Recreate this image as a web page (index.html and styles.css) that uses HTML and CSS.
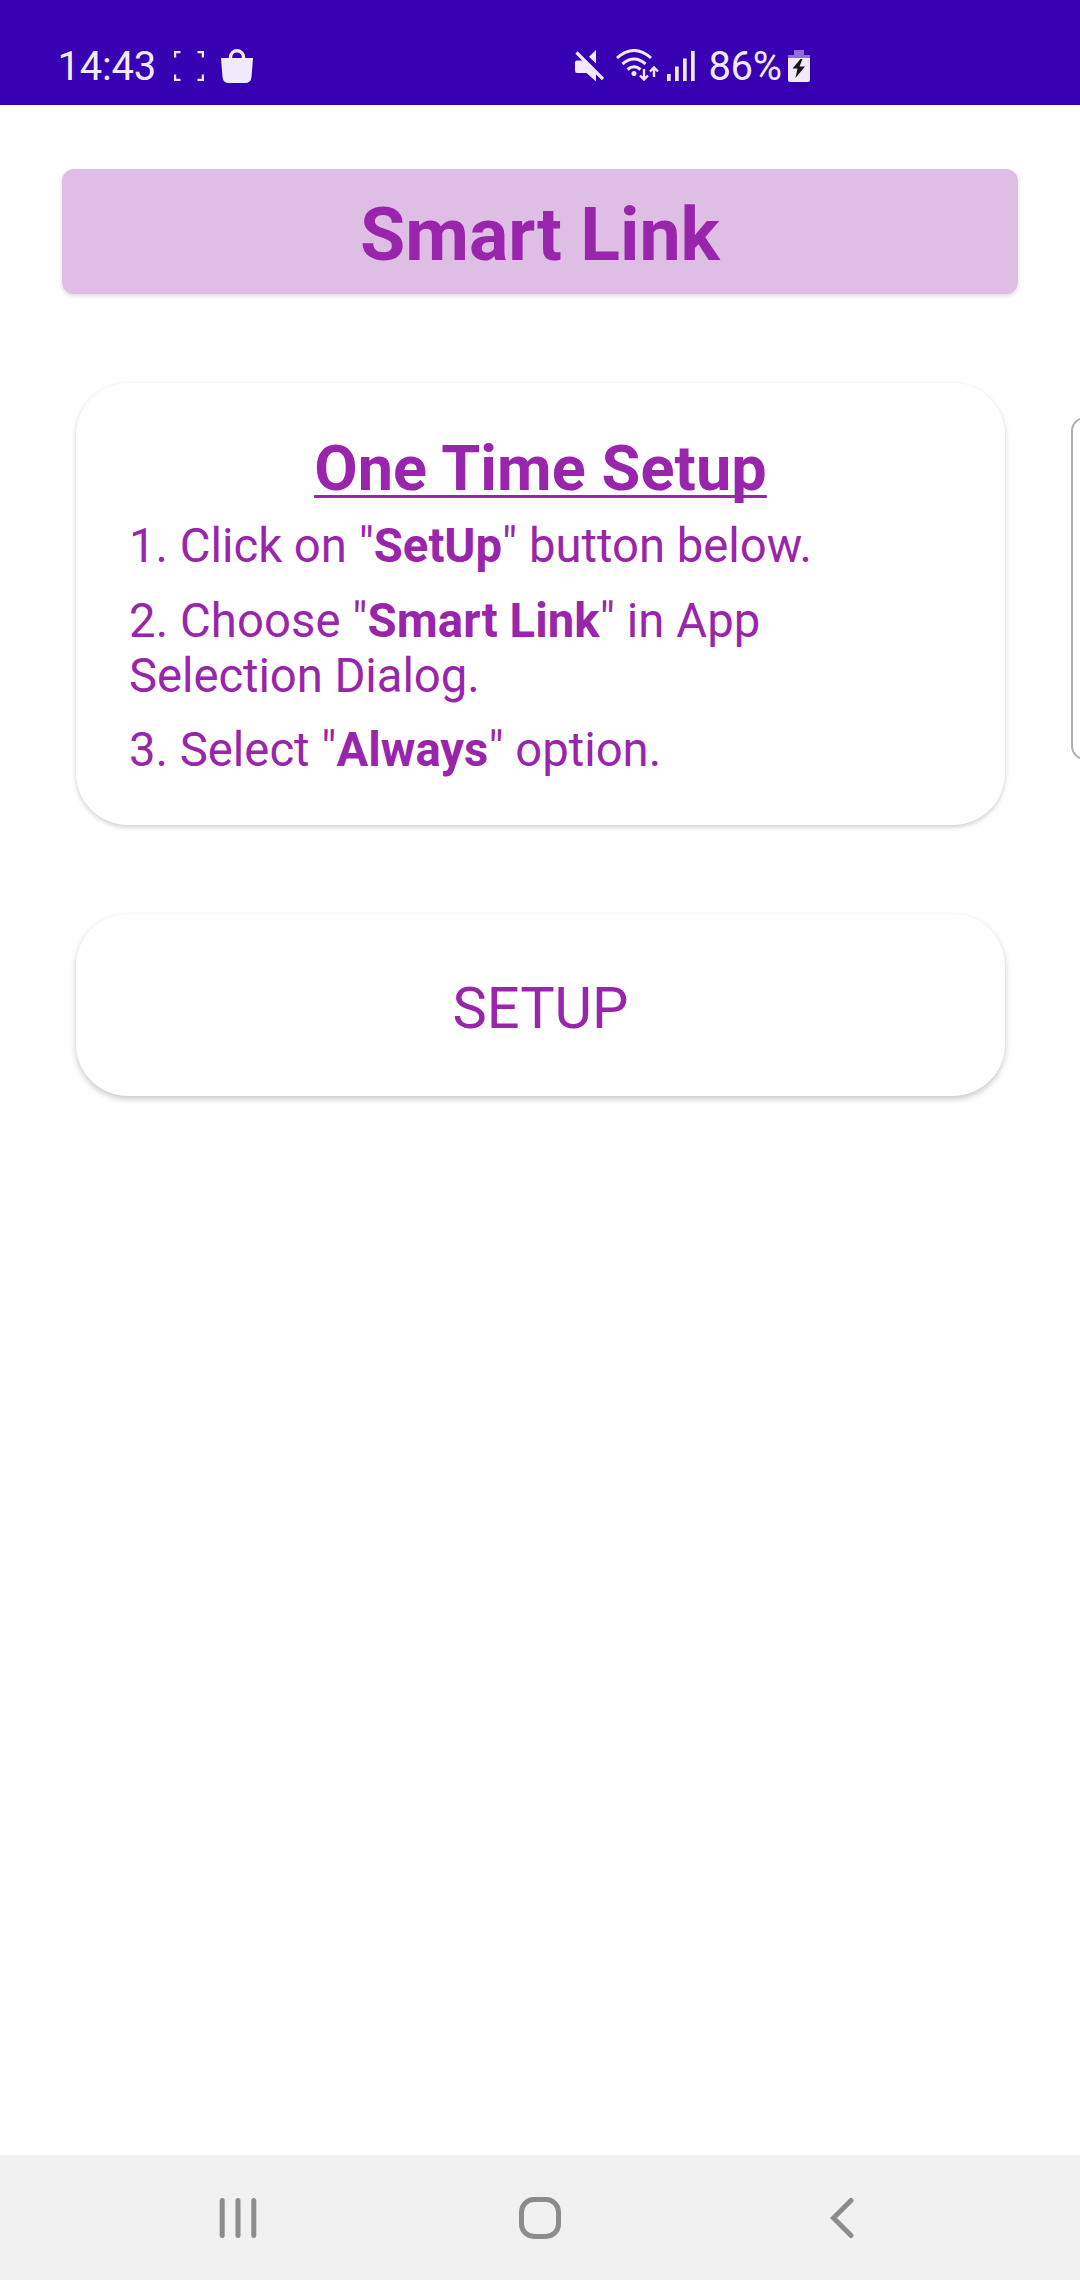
FILE: index.html
```html
<!DOCTYPE html>
<html lang="en">
<head>
<meta charset="utf-8">
<title>Smart Link</title>
<link rel="stylesheet" href="styles.css">
</head>
<body>
<div class="screen">
  <header class="status">
    <div class="status-left">
      <span class="clock">14:43</span>
      <svg class="i-frame" width="30" height="30" viewBox="0 0 30 30" fill="none" stroke="#f0eafc" stroke-width="2.2"><path d="M1.1 6.5V1.1H6.5M23.5 1.1H28.9V6.5M28.9 23.5V28.9H23.5M6.5 28.9H1.1V23.5"/></svg>
      <svg class="i-bag" width="32" height="34" viewBox="0 0 32 34"><path d="M9.5 11V8a6.5 6.2 0 0 1 13 0v3" fill="none" stroke="#f0eafc" stroke-width="3.4"/><path d="M0 9H32L30.5 28Q30 34 24 34H8Q2 34 1.5 28Z" fill="#f0eafc"/></svg>
    </div>
    <div class="status-right">
      <svg width="29" height="32" viewBox="0 0 29 32" fill="#f0eafc"><path d="M2 10.500H10L21 22V31.500L11.500 23H2Q0 23 0 21V12.500Q0 10.500 2 10.500ZM21 0V13.500L14 6.800Z"/><path d="M1.500 2.500L28 29" stroke="#f0eafc" stroke-width="3.200"/></svg>
      <svg class="i-wifi" width="43" height="33" viewBox="0 0 43 33" fill="none" stroke="#f0eafc" stroke-width="3"><path d="M1 9Q18 -6 35 9M6.500 15Q18 5 29.500 15M11.500 20.500Q18 15 24.500 20.500"/><circle cx="18" cy="24.500" r="2.500" fill="#f0eafc" stroke="none"/><path d="M28 20V30M24 26.500L28 30.500L32 26.500M38 28V19M34 22.500L38 18.500L42 22.500" stroke-width="2.400"/></svg>
      <svg class="i-signal" width="28" height="30" viewBox="0 0 28 30" fill="#f0eafc"><path d="M0 23H3.700V30H0ZM8 15.500H11.700V30H8ZM16 7.500H19.700V30H16ZM24 0H27.700V30H24Z"/></svg>
      <span class="battery-text">86%</span>
      <svg class="i-battery" width="22" height="32" viewBox="0 0 22 32"><path d="M6 0H16V5H22V8H0V5H6Z" fill="#8f6cd6"/><path d="M0 8H22V30Q22 32 20 32H2Q0 32 0 30Z" fill="#f0eafc"/><path d="M12.500 9L4.500 18.500H9.500L7.500 28L17 16.500H11.500L14.500 9Z" fill="#17151c"/></svg>
    </div>
  </header>
  <main class="content">
    <h1 class="banner">Smart Link</h1>
    <section class="card">
      <h2 class="card-title">One Time Setup</h2>
      <p class="step">1. Click on "<b>SetUp</b>" button below.</p>
      <p class="step"><span class="loose">2. Choose "<b>Smart Link</b>" in App</span><br><span class="tight">Selection Dialog.</span></p>
      <p class="step">3. Select "<b>Always</b>" option.</p>
    </section>
    <button class="setup">SETUP</button>
  </main>
  <nav class="nav">
    <svg width="38" height="42" viewBox="0 0 38 42" stroke="#8c8c8c" stroke-width="5" stroke-linecap="round"><path d="M3.200 3.500V38.500M19 3.500V38.500M34.800 3.500V38.500"/></svg>
    <svg class="i-home" width="42" height="42" viewBox="0 0 42 42" fill="none" stroke="#8c8c8c" stroke-width="5"><rect x="2.500" y="2.500" width="37" height="37" rx="12.500"/></svg>
    <svg class="i-back" width="24" height="42" viewBox="0 0 24 42" fill="none" stroke="#8c8c8c" stroke-width="5" stroke-linecap="round"><path d="M21 3.500L3.500 21L21 38.500"/></svg>
  </nav>
  <div class="edge-handle"></div>
</div>
</body>
</html>
```
FILE: styles.css
```css
* { box-sizing: border-box; }
body { margin: 0; font-family: Roboto, "Liberation Sans", sans-serif; color: #9925ac; }
h1, h2, p { margin: 0; }
svg { display: block; flex: none; }
.screen { position: relative; display: flex; flex-direction: column; width: 1080px; height: 2280px; background: #fff; overflow: hidden; }
.status { display: flex; justify-content: space-between; height: 105px; padding: 49px 270.5px 0 57.5px; background: #3700b3; color: #f0eafc; }
.status-left, .status-right { display: flex; height: 33px; align-items: center; }
.clock, .battery-text { font-size: 40px; line-height: 34px; padding-top: 2px; }
.clock { width: 99px; letter-spacing: -.2px; }
.i-frame { margin-left: 17px; }
.i-bag { margin-left: 17px; }
.i-wifi { margin-left: 12px; }
.i-signal { margin-left: 8px; }
.battery-text { margin-left: 13.5px; width: 79px; letter-spacing: -.4px; }
.content { flex: 1; display: flex; flex-direction: column; padding: 64px 62px 0; }
.banner { height: 125px; border-radius: 12px; background: #dfbee5; text-align: center; font-size: 73.5px; line-height: 133px; box-shadow: 0 2px 4px rgba(0,0,0,.14); }
.card { height: 442px; margin: 89px 13px 0 14px; padding: 51px 53px 0; border-radius: 52px; background: #fff; box-shadow: 0 2px 5px rgba(0,0,0,.2); }
.card-title { margin-bottom: 15px; text-align: center; font-size: 63px; line-height: 70px; letter-spacing: .08px; text-decoration: underline; text-decoration-thickness: 3px; text-underline-offset: 5px; text-decoration-skip-ink: none; }
.step { font-size: 47.25px; line-height: 55px; margin-bottom: 20px; }
.step + .step { margin-bottom: 19px; }
.loose { letter-spacing: .08px; }
.tight { letter-spacing: -.07px; }
.setup { height: 182px; margin: 89px 13px 0 14px; padding: 6px 0 0; border: 0; border-radius: 52px; background: #fff; color: inherit; font: 57.75px Roboto, "Liberation Sans", sans-serif; box-shadow: 0 3px 6px rgba(0,0,0,.22); }
.nav { display: flex; align-items: center; height: 125px; padding: 1px 0 0 218.5px; background: #f1f1f1; }
.i-home { margin-left: 262px; }
.i-back { margin-left: 269.5px; }
.edge-handle { position: absolute; left: 1070.5px; top: 417px; width: 30px; height: 343px; border: 2px solid #b0b0b0; border-radius: 14px; }
```
